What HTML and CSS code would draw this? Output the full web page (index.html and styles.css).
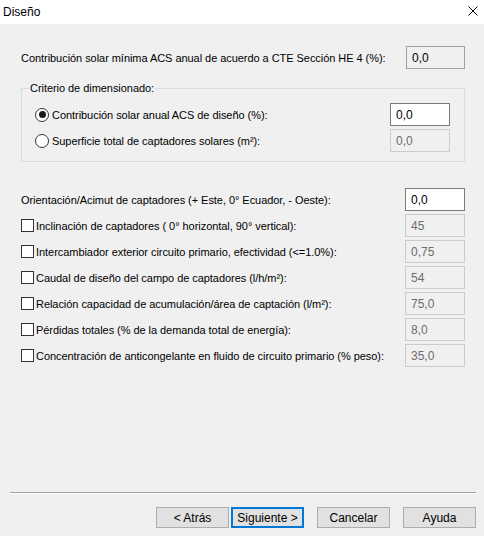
FILE: index.html
```html
<!DOCTYPE html>
<html lang="es">
<head>
<meta charset="utf-8">
<title>Diseño</title>
<link rel="stylesheet" href="styles.css">
</head>
<body>
<div class="window">
  <div class="titlebar">
    <span class="title">Diseño</span>
    <svg class="close" width="10" height="10" viewBox="0 0 10 10"><path d="M0.5 0.5 L9.5 9.5 M9.5 0.5 L0.5 9.5" stroke="#000" stroke-width="1" fill="none"/></svg>
  </div>
  <div class="content">
    <div class="row top-row">
      <span class="label">Contribución solar mínima ACS anual de acuerdo a CTE Sección HE 4 (%):</span>
      <div class="field readonly">0,0</div>
    </div>
    <fieldset class="group">
      <legend>Criterio de dimensionado:</legend>
      <div class="row">
        <span class="opt"><span class="radio checked"></span>Contribución solar anual ACS de diseño (%):</span>
        <div class="field active">0,0</div>
      </div>
      <div class="row">
        <span class="opt"><span class="radio"></span>Superficie total de captadores solares (m²):</span>
        <div class="field disabled">0,0</div>
      </div>
    </fieldset>
    <div class="list">
      <div class="row">
        <span class="label">Orientación/Acimut de captadores (+ Este, 0° Ecuador, - Oeste):</span>
        <div class="field active">0,0</div>
      </div>
      <div class="row">
        <span class="opt"><span class="check"></span>Inclinación de captadores ( 0° horizontal, 90° vertical):</span>
        <div class="field disabled">45</div>
      </div>
      <div class="row">
        <span class="opt"><span class="check"></span>Intercambiador exterior circuito primario, efectividad (&lt;=1.0%):</span>
        <div class="field disabled">0,75</div>
      </div>
      <div class="row">
        <span class="opt"><span class="check"></span>Caudal de diseño del campo de captadores (l/h/m²):</span>
        <div class="field disabled">54</div>
      </div>
      <div class="row">
        <span class="opt"><span class="check"></span>Relación capacidad de acumulación/área de captación (l/m²):</span>
        <div class="field disabled">75,0</div>
      </div>
      <div class="row">
        <span class="opt"><span class="check"></span>Pérdidas totales (% de la demanda total de energía):</span>
        <div class="field disabled">8,0</div>
      </div>
      <div class="row">
        <span class="opt"><span class="check"></span>Concentración de anticongelante en fluido de circuito primario (% peso):</span>
        <div class="field disabled">35,0</div>
      </div>
    </div>
  </div>
  <div class="footer">
    <div class="sep"></div>
    <div class="buttons">
      <button class="btn">&lt; Atrás</button>
      <button class="btn default">Siguiente &gt;</button>
      <button class="btn gap">Cancelar</button>
      <button class="btn gap">Ayuda</button>
    </div>
  </div>
</div>
</body>
</html>
```
FILE: styles.css
```css
html, body {
  margin: 0;
  padding: 0;
}
body {
  width: 484px;
  height: 536px;
  overflow: hidden;
  background: #f0f0f0;
  font-family: "Liberation Sans", Arial, sans-serif;
  font-size: 11px;
  letter-spacing: -0.05px;
  color: #000;
}
.window {
  display: flex;
  flex-direction: column;
  height: 536px;
}
.titlebar {
  height: 24px;
  background: #fff;
  display: flex;
  align-items: center;
  justify-content: space-between;
  padding: 0 6px 0 3px;
  flex: none;
}
.title {
  font-size: 12px;
  letter-spacing: 0;
}
.close {
  display: block;
  margin-top: -2px;
}
.content {
  flex: 1;
  padding: 22px 19px 0 21px;
}
.row {
  display: flex;
  align-items: center;
  justify-content: space-between;
  height: 23px;
}
.label {
  white-space: nowrap;
}
.field {
  box-sizing: border-box;
  width: 60px;
  height: 23px;
  padding: 0 5px;
  display: flex;
  align-items: center;
  border: 1px solid #7a7a7a;
  background: #fff;
  font-size: 12px;
  letter-spacing: 0;
}
.field.readonly {
  width: 59px;
  border-color: #a0a0a0;
  background: #f0f0f0;
}
.field.disabled {
  border-color: #cccccc;
  background: #f0f0f0;
  color: #6d6d6d;
}
.opt {
  display: flex;
  align-items: center;
  white-space: nowrap;
}
.radio {
  box-sizing: border-box;
  width: 14px;
  height: 14px;
  border: 1px solid #333;
  border-radius: 50%;
  background: #fff;
  margin-right: 3px;
  display: flex;
  align-items: center;
  justify-content: center;
}
.radio.checked::after {
  content: "";
  width: 7px;
  height: 7px;
  border-radius: 50%;
  background: #1a1a1a;
}
.check {
  box-sizing: border-box;
  width: 13px;
  height: 13px;
  border: 1px solid #333;
  background: #fff;
  margin-right: 2px;
}
.group {
  margin: 12px 0 0 0;
  padding: 8px 14px 9px 13px;
  border: 1px solid #dcdcdc;
  display: flex;
  flex-direction: column;
  gap: 3px;
}
.group legend {
  line-height: 14px;
  padding: 0 1px;
  margin-left: -6px;
}
.list {
  margin-top: 26px;
  display: flex;
  flex-direction: column;
  gap: 3px;
}
.footer {
  flex: none;
  padding: 0 8px 8px 10px;
}
.sep {
  height: 1px;
  background: #a0a0a0;
  border-bottom: 1px solid #fff;
}
.buttons {
  display: flex;
  justify-content: flex-end;
  margin-top: 13px;
}
.btn {
  box-sizing: border-box;
  width: 73px;
  height: 21px;
  margin: 0 0 0 2px;
  padding: 0;
  background: #e1e1e1;
  border: 1px solid #adadad;
  font-family: inherit;
  font-size: 12px;
  letter-spacing: 0;
  color: #000;
}
.btn.default {
  border: 2px solid #0078d7;
}
.btn.gap {
  margin-left: 13px;
}
```
